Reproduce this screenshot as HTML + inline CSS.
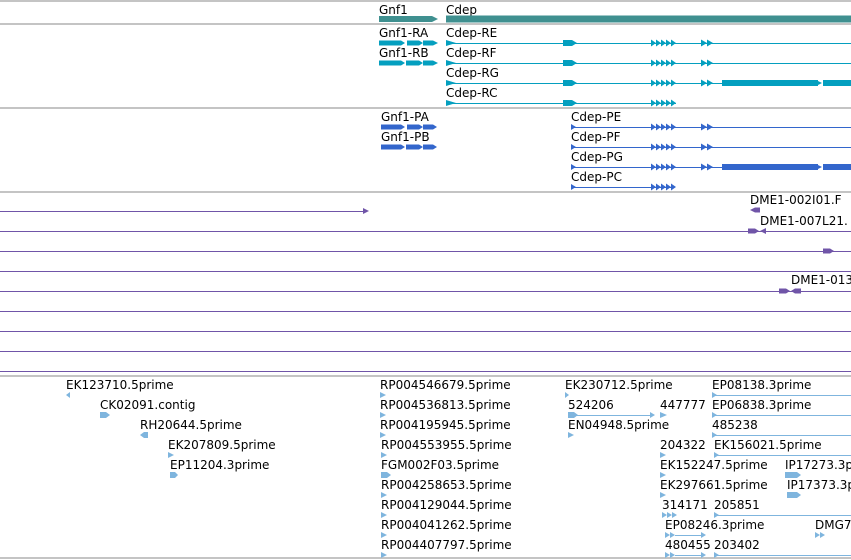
<!DOCTYPE html>
<html><head><meta charset="utf-8"><style>
html,body{margin:0;padding:0;background:#fff;width:851px;height:560px;overflow:hidden}
svg{display:block}
text{font-family:"DejaVu Sans","Liberation Sans",sans-serif;font-size:12px;fill:#000}
line{shape-rendering:crispEdges}
</style></head><body>
<svg width="851" height="560" viewBox="0 0 851 560" xmlns="http://www.w3.org/2000/svg">
<g stroke="#c4c4c4" stroke-width="2">
<line x1="0" y1="1" x2="851" y2="1"/><line x1="0" y1="24" x2="851" y2="24"/>
<line x1="0" y1="108" x2="851" y2="108"/><line x1="0" y1="192" x2="851" y2="192"/>
<line x1="0" y1="376" x2="851" y2="376"/><line x1="0" y1="558" x2="851" y2="558"/>
</g>
<!-- genes -->
<text x="379" y="14">Gnf1</text><text x="446" y="14">Cdep</text>
<polygon points="379,16 432,16 438,19 432,22 379,22" fill="#3f9090"/>
<rect x="446" y="15.5" width="405" height="7" fill="#3f9090"/>
<!-- transcripts -->
<g fill="#049fbf" stroke="#049fbf">
<text x="379" y="37" stroke="none" fill="#000">Gnf1-RA</text>
<text x="379" y="57" stroke="none" fill="#000">Gnf1-RB</text>
<text x="446" y="37" stroke="none" fill="#000">Cdep-RE</text>
<text x="446" y="57" stroke="none" fill="#000">Cdep-RF</text>
<text x="446" y="77" stroke="none" fill="#000">Cdep-RG</text>
<text x="446" y="97" stroke="none" fill="#000">Cdep-RC</text>
<g stroke="none">
<polygon points="379,40.5 401,40.5 405,43 401,45.5 379,45.5"/><polygon points="407,40.5 419,40.5 423,43 419,45.5 407,45.5"/><polygon points="423,40.5 433,40.5 438,43 433,45.5 423,45.5"/>
<polygon points="379,60.5 401,60.5 405,63 401,65.5 379,65.5"/><polygon points="406,60.5 419,60.5 423,63 419,65.5 406,65.5"/><polygon points="423,60.5 433,60.5 438,63 433,65.5 423,65.5"/>
</g>
<line x1="446" y1="43.5" x2="851" y2="43.5"/><line x1="446" y1="63.5" x2="851" y2="63.5"/><line x1="446" y1="83.5" x2="722" y2="83.5"/><line x1="446" y1="103.5" x2="676" y2="103.5"/>
<g stroke="none">
<polygon points="446,40 456,43 446,46"/><polygon points="446,60 456,63 446,66"/><polygon points="446,80 456,83 446,86"/><polygon points="446,100 456,103 446,106"/>
<polygon points="563,40 572,40 577,43 572,46 563,46"/><polygon points="563,60 572,60 577,63 572,66 563,66"/><polygon points="563,80 572,80 577,83 572,86 563,86"/><polygon points="563,100 572,100 577,103 572,106 563,106"/>
<rect x="722" y="80" width="96" height="6"/><polygon points="816,80 822,83 816,86"/><rect x="823" y="80" width="28" height="6"/>
</g>
</g>
<!-- proteins -->
<g fill="#3366cc" stroke="#3366cc">
<text x="381" y="121" stroke="none" fill="#000">Gnf1-PA</text>
<text x="381" y="141" stroke="none" fill="#000">Gnf1-PB</text>
<text x="571" y="121" stroke="none" fill="#000">Cdep-PE</text>
<text x="571" y="141" stroke="none" fill="#000">Cdep-PF</text>
<text x="571" y="161" stroke="none" fill="#000">Cdep-PG</text>
<text x="571" y="181" stroke="none" fill="#000">Cdep-PC</text>
<g stroke="none">
<polygon points="381,124.5 401,124.5 405,127 401,129.5 381,129.5"/><polygon points="407,124.5 419,124.5 423,127 419,129.5 407,129.5"/><polygon points="423,124.5 433,124.5 437,127 433,129.5 423,129.5"/>
<polygon points="381,144.5 401,144.5 405,147 401,149.5 381,149.5"/><polygon points="406,144.5 419,144.5 423,147 419,149.5 406,149.5"/><polygon points="423,144.5 433,144.5 437,147 433,149.5 423,149.5"/>
<rect x="722" y="164" width="96" height="6"/><polygon points="816,164 822,167 816,170"/><rect x="823" y="164" width="28" height="6"/>
</g>
<line x1="571" y1="127.5" x2="851" y2="127.5"/><line x1="571" y1="147.5" x2="851" y2="147.5"/><line x1="571" y1="167.5" x2="722" y2="167.5"/><line x1="571" y1="187.5" x2="674" y2="187.5"/>
</g>
<defs>
<g id="a5c"><polygon points="0,-3.5 5,0 0,3.5"/><polygon points="5,-3.5 10,0 5,3.5"/><polygon points="10,-3.5 15,0 10,3.5"/><polygon points="15,-3.5 20,0 15,3.5"/><polygon points="20,-3.5 25,0 20,3.5"/></g>
<g id="a2c"><polygon points="0,-3.5 6,0 0,3.5"/><polygon points="6,-3.5 12,0 6,3.5"/></g>
</defs>
<g fill="#049fbf">
<use href="#a5c" x="651" y="43"/><use href="#a2c" x="701" y="43"/>
<use href="#a5c" x="651" y="63"/><use href="#a2c" x="701" y="63"/>
<use href="#a5c" x="651" y="83"/><use href="#a2c" x="701" y="83"/>
<use href="#a5c" x="651" y="103"/>
</g>
<g fill="#3366cc">
<polygon points="571,124 576,127 571,130"/><polygon points="571,144 576,147 571,150"/><polygon points="571,164 576,167 571,170"/><polygon points="571,184 576,187 571,190"/>
<use href="#a5c" x="651" y="127"/><use href="#a2c" x="701" y="127"/>
<use href="#a5c" x="651" y="147"/><use href="#a2c" x="701" y="147"/>
<use href="#a5c" x="651" y="167"/><use href="#a2c" x="701" y="167"/>
<use href="#a5c" x="651" y="187"/>
</g>
<!-- purple -->
<g stroke="#7055a8" stroke-width="1">
<line x1="0" y1="211.5" x2="366" y2="211.5"/>
<line x1="0" y1="231.5" x2="851" y2="231.5"/><line x1="0" y1="251.5" x2="851" y2="251.5"/>
<line x1="0" y1="271.5" x2="851" y2="271.5"/><line x1="0" y1="291.5" x2="851" y2="291.5"/>
<line x1="0" y1="311.5" x2="851" y2="311.5"/><line x1="0" y1="331.5" x2="851" y2="331.5"/>
<line x1="0" y1="351.5" x2="851" y2="351.5"/><line x1="0" y1="371.5" x2="851" y2="371.5"/>
</g>
<g fill="#7055a8">
<polygon points="363,208 369,211 363,214"/>
<text x="750" y="204" fill="#000">DME1-002I01.F</text>
<polygon points="750,210 755,207.5 760,207.5 760,212.5 755,212.5"/>
<text x="760" y="225" fill="#000">DME1-007L21.</text>
<polygon points="748,228.5 755,228.5 759,231 755,233.5 748,233.5"/><polygon points="760,231 766,228 766,234"/>
<polygon points="823,248.5 830,248.5 834,251 830,253.5 823,253.5"/>
<text x="791" y="284" fill="#000">DME1-013</text>
<polygon points="779,288.5 786,288.5 790,291 786,293.5 779,293.5"/><polygon points="791,291 795,288.5 801,288.5 801,293.5 795,293.5"/>
</g>
<!-- ESTs -->
<g>
<text x="66" y="389">EK123710.5prime</text>
<text x="100" y="409">CK02091.contig</text>
<text x="140" y="429">RH20644.5prime</text>
<text x="168" y="449">EK207809.5prime</text>
<text x="170" y="469">EP11204.3prime</text>
<text x="380" y="389">RP004546679.5prime</text>
<text x="380" y="409">RP004536813.5prime</text>
<text x="380" y="429">RP004195945.5prime</text>
<text x="381" y="449">RP004553955.5prime</text>
<text x="381" y="469">FGM002F03.5prime</text>
<text x="381" y="489">RP004258653.5prime</text>
<text x="381" y="509">RP004129044.5prime</text>
<text x="381" y="529">RP004041262.5prime</text>
<text x="381" y="549">RP004407797.5prime</text>
<text x="565" y="389">EK230712.5prime</text>
<text x="568" y="409">524206</text>
<text x="660" y="409">447777</text>
<text x="568" y="429">EN04948.5prime</text>
<text x="660" y="449">204322</text>
<text x="660" y="469">EK152247.5prime</text>
<text x="660" y="489">EK297661.5prime</text>
<text x="662" y="509">314171</text>
<text x="665" y="529">EP08246.3prime</text>
<text x="665" y="549">480455</text>
<text x="712" y="389">EP08138.3prime</text>
<text x="712" y="409">EP06838.3prime</text>
<text x="712" y="429">485238</text>
<text x="714" y="449">EK156021.5prime</text>
<text x="785" y="469">IP17273.3prime</text>
<text x="787" y="489">IP17373.3prime</text>
<text x="714" y="509">205851</text>
<text x="815" y="529">DMG7</text>
<text x="714" y="549">203402</text>
</g>
<g fill="#7fb5de">
<polygon points="66,395 70,392 70,398"/>
<polygon points="100,412 106,412 110,415 106,418 100,418"/>
<polygon points="140,435 144,432 148,432 148,438 144,438"/>
<polygon points="168,452 174,455 168,458"/>
<polygon points="170,472 175,472 178,475 175,478 170,478"/>
<polygon points="380,392 386,395 380,398"/><polygon points="380,412 386,415 380,418"/><polygon points="380,432 386,435 380,438"/>
<polygon points="381,452 387,455 381,458"/><polygon points="381,472 387,472 391,475 387,478 381,478"/>
<polygon points="381,492 387,495 381,498"/><polygon points="381,512 387,515 381,518"/><polygon points="381,532 387,535 381,538"/><polygon points="381,552 387,555 381,558"/>
<polygon points="565,392 569,395 565,398"/>
<polygon points="568,412 574,412 578,415 574,418 568,418"/><polygon points="650,412 655,415 650,418"/>
<polygon points="660,412 667,415 660,418"/>
<polygon points="568,432 574,435 568,438"/>
<polygon points="660,452 666,455 660,458"/><polygon points="660,472 666,475 660,478"/><polygon points="660,492 666,495 660,498"/>
<polygon points="662,512 667,515 662,518"/><polygon points="667,512 672,515 667,518"/><polygon points="672,512 677,515 672,518"/>
<polygon points="665,532 670,535 665,538"/><polygon points="670,532 675,535 670,538"/><polygon points="701,532 706,535 701,538"/>
<polygon points="665,552 670,555 665,558"/><polygon points="670,552 675,555 670,558"/><polygon points="701,552 706,555 701,558"/>
<polygon points="712,392 717,395 712,398"/><polygon points="712,412 717,415 712,418"/><polygon points="712,432 717,435 712,438"/>
<polygon points="714,452 719,455 714,458"/><polygon points="714,512 719,515 714,518"/><polygon points="714,552 719,555 714,558"/>
<polygon points="785,472 797,472 801,475 797,478 785,478"/>
<polygon points="787,492 797,492 801,495 797,498 787,498"/>
<polygon points="815,532 820,535 815,538"/><polygon points="820,532 825,535 820,538"/>
</g>
<g stroke="#7fb5de" stroke-width="1">
<line x1="574" y1="415.5" x2="651" y2="415.5"/>
<line x1="675" y1="535.5" x2="702" y2="535.5"/><line x1="675" y1="555.5" x2="702" y2="555.5"/>
<line x1="712" y1="395.5" x2="851" y2="395.5"/><line x1="712" y1="415.5" x2="851" y2="415.5"/><line x1="712" y1="435.5" x2="851" y2="435.5"/>
<line x1="714" y1="455.5" x2="851" y2="455.5"/><line x1="714" y1="515.5" x2="851" y2="515.5"/><line x1="714" y1="555.5" x2="851" y2="555.5"/>
</g>
</svg>
</body></html>
